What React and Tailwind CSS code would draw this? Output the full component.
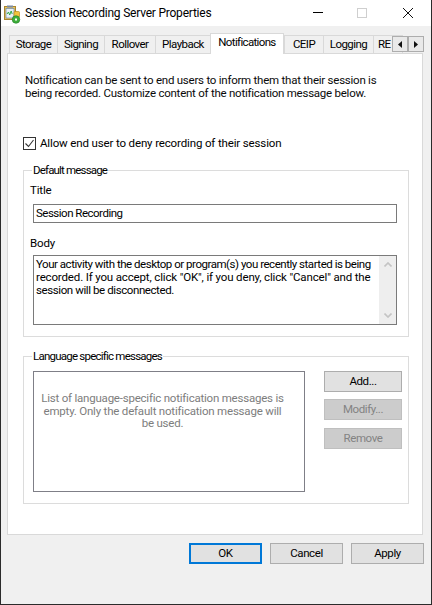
import React from "react";

function Btn({ w = "w-[73px]", children, disabled, primary, className = "" }) {
  const base = primary
    ? "border-2 border-[#0078d7] bg-[#e1e1e1] text-black"
    : disabled
    ? "border border-[#bfbfbf] bg-[#cccccc] text-[#838383]"
    : "border border-[#adadad] bg-[#e1e1e1] text-black";
  return (
    <div className={`${w} h-[21px] flex items-center justify-center tracking-[-0.4px] ${base} ${className}`}>
      {children}
    </div>
  );
}

function Tab({ w, children, active }) {
  if (active)
    return (
      <div className={`${w} h-[21px] -mb-px z-10 bg-white border border-b-0 border-[#d9d9d9] flex items-center justify-center pb-[2px] text-black shrink-0 tracking-[-0.65px]`}>
        {children}
      </div>
    );
  return (
    <div className={`${w} h-[18px] bg-[#f0f0f0] border border-b-0 border-[#d9d9d9] -mr-px flex items-center justify-center text-black shrink-0 tracking-[-0.55px]`}>
      {children}
    </div>
  );
}

function Group({ title, className, titleClass, children }) {
  return (
    <div className={`relative border border-[#dcdcdc] ${className}`}>
      <div className={`absolute left-[8px] -top-[8px] bg-white px-[1px] leading-[14px] text-black ${titleClass}`}>{title}</div>
      {children}
    </div>
  );
}

export default function App() {
  return (
    <div className="w-[432px] h-[605px] flex flex-col bg-[#f0f0f0] border-x border-b border-[#2b2b2b] text-[11.5px] overflow-hidden font-['Roboto','Liberation_Sans',sans-serif] text-[#111]">
      <div className="h-[26px] bg-white flex items-center shrink-0 relative">
        <svg className="ml-[3px] w-[17px] h-[19px] mt-[2px]" viewBox="0 0 17 19">
          <rect x="0.5" y="1.500" width="11" height="13" fill="#e9c65a" stroke="#a9842f" />
          <rect x="3" y="0.500" width="6" height="2" fill="#7c8aa0" />
          <rect x="2" y="3.500" width="8" height="9.500" fill="#e6eff6" stroke="#6d87a8" strokeWidth="0.7" />
          <path d="M3 9l1.500-2 1.200 3 1.500-4 1 3" stroke="#2fa84a" strokeWidth="1" fill="none" />
          <rect x="10" y="6.500" width="5.500" height="6" rx="1" fill="#f3c33e" stroke="#b98a1c" strokeWidth="0.7" />
          <circle cx="12" cy="14.500" r="3.800" fill="#3fae3a" stroke="#1f7f25" strokeWidth="0.6" />
          <rect x="11" y="13.500" width="2" height="2" fill="#fff" />
        </svg>
        <span className="ml-[4px] text-black text-[12px] tracking-[-0.22px]">Session Recording Server Properties</span>
        <div className="absolute left-[312px] top-[12px] w-[10px] h-px bg-black" />
        <div className="absolute left-[356px] top-[8px] w-[10px] h-[10px] border border-[#cfcfcf]" />
        <svg className="absolute left-[402px] top-[8px] w-[10px] h-[10px]" viewBox="0 0 10 10">
          <path d="M0 0L10 10M10 0L0 10" stroke="#111" strokeWidth="1" />
        </svg>
      </div>

      <div className="flex-1 flex flex-col pl-[6px] pr-[8px]">
        <div className="relative flex items-end h-[27px] pl-[2px] shrink-0">
          <Tab w="w-[49px]">Storage</Tab>
          <Tab w="w-[48px]">Signing</Tab>
          <Tab w="w-[52px]">Rollover</Tab>
          <Tab w="w-[56px]">Playback</Tab>
          <Tab w="w-[74px]" active>Notifications</Tab>
          <Tab w="w-[40px]">CEIP</Tab>
          <Tab w="w-[51px]">Logging</Tab>
          <Tab w="w-[30px]"><span className="w-[24px] pl-[2px] pr-[6px] overflow-hidden whitespace-nowrap">RE</span></Tab>
          <div className="absolute left-[385px] top-[10px] flex z-20">
            <div className="w-[16px] h-[16px] border border-[#adadad] bg-[#e9e9e9] flex items-center justify-center">
              <svg className="w-[4px] h-[7px]" viewBox="0 0 4 7"><path d="M4 0v7L0 3.500z" fill="#111" /></svg>
            </div>
            <div className="w-[16px] h-[16px] border border-[#adadad] bg-[#e9e9e9] flex items-center justify-center">
              <svg className="w-[4px] h-[7px]" viewBox="0 0 4 7"><path d="M0 0v7L4 3.500z" fill="#111" /></svg>
            </div>
          </div>
        </div>

        <div className="h-[482px] shrink-0 bg-white border border-[#d9d9d9] pl-[15px] pr-[13px] flex flex-col">
          <div className="mt-[20px] pl-[2px] leading-[13px] whitespace-nowrap text-[#0a0a0a] tracking-[-0.24px]">
            <div>Notification can be sent to end users to inform them that their session is</div>
            <div>being recorded. Customize content of the notification message below.</div>
          </div>
          <label className="mt-[37px] flex items-center h-[13px]">
            <span className="w-[13px] h-[13px] border border-[#333] bg-white flex items-center justify-center shrink-0">
              <svg className="w-[11px] h-[11px]" viewBox="0 0 11 11"><path d="M1.500 5.500L4.500 8.500L9.500 2" fill="none" stroke="#333" strokeWidth="1.1" /></svg>
            </span>
            <span className="ml-[4px] text-black tracking-[-0.14px]">Allow end user to deny recording of their session</span>
          </label>

          <Group title="Default message" titleClass="tracking-[-0.83px]" className="mt-[20px] h-[167px] pl-[9px] shrink-0">
            <div className="mt-[12px] -ml-[3px] leading-[14px] text-black tracking-[-0.15px]">Title</div>
            <div className="mt-[7px] h-[19px] w-[364px] border border-[#7a7a7a] flex items-center pl-[2px] text-black tracking-[-0.5px]">Session Recording</div>
            <div className="mt-[13px] -ml-[3px] leading-[14px] text-black tracking-[-0.15px]">Body</div>
            <div className="mt-[5px] h-[70px] w-[364px] border border-[#7a7a7a] flex">
              <div className="flex-1 pl-[2px] pt-[2px] leading-[13px] text-black whitespace-nowrap">
                <div className="tracking-[-0.47px]">Your activity with the desktop or program(s) you recently started is being</div>
                <div className="tracking-[-0.15px]">recorded. If you accept, click "OK", if you deny, click "Cancel" and the</div>
                <div className="tracking-[-0.41px]">session will be disconnected.</div>
              </div>
              <div className="w-[17px] bg-[#eeeeee] flex flex-col items-center justify-between py-[6px]">
                <svg className="w-[8px] h-[5px]" viewBox="0 0 8 5"><path d="M0.500 4.500L4 1L7.500 4.500" fill="none" stroke="#c4c4c4" strokeWidth="1.6" /></svg>
                <svg className="w-[8px] h-[5px]" viewBox="0 0 8 5"><path d="M0.500 0.500L4 4L7.500 0.500" fill="none" stroke="#c4c4c4" strokeWidth="1.6" /></svg>
              </div>
            </div>
          </Group>

          <Group title="Language specific messages" titleClass="tracking-[-0.77px]" className="mt-[19px] h-[148px] pl-[9px] shrink-0 flex">
            <div className="mt-[14px] h-[121px] w-[272px] shrink-0 border border-[#7f7f87] pt-[20px] pr-[13px] leading-[12.5px] text-center text-[#7d7d7d] whitespace-nowrap">
              <div className="tracking-[-0.22px]">List of language-specific notification messages is</div>
              <div className="tracking-[-0.2px]">empty. Only the default notification message will</div>
              <div className="tracking-[-0.2px]">be used.</div>
            </div>
            <div className="ml-[19px] mt-[14px] flex flex-col shrink-0">
              <Btn w="w-[78px]">Add...</Btn>
              <Btn w="w-[78px]" disabled className="mt-[7px]">Modify...</Btn>
              <Btn w="w-[78px]" disabled className="mt-[8px]">Remove</Btn>
            </div>
          </Group>
        </div>

        <div className="mt-[8px] flex justify-end gap-[8px] -mr-[1px]">
          <Btn primary>OK</Btn>
          <Btn>Cancel</Btn>
          <Btn>Apply</Btn>
        </div>
      </div>
    </div>
  );
}
